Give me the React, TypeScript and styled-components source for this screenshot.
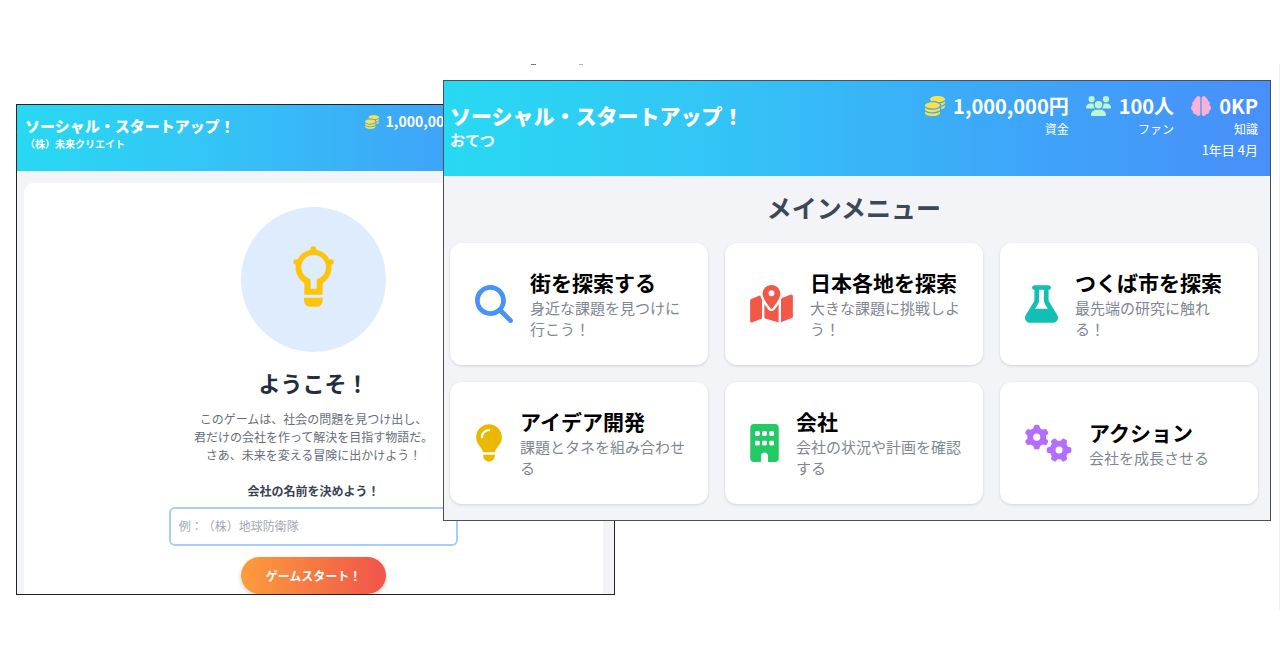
import React from "react";
import styled, { createGlobalStyle } from "styled-components";
import {
  FaBrain,
  FaBuilding,
  FaCoins,
  FaFlask,
  FaGears,
  FaLightbulb,
  FaMagnifyingGlass,
  FaMapLocationDot,
  FaUsers,
} from "react-icons/fa6";

const GlobalStyle = createGlobalStyle`
  * { box-sizing: border-box; }
  body {
    margin: 0;
    background: #ffffff;
    font-family: "Noto Sans CJK JP", "Noto Sans", sans-serif;
    text-spacing-trim: space-all;
  }
  h1, h2, p { margin: 0; }
  button, input { font-family: inherit; }
`;

const Stage = styled.main`
  margin-top: 64px;
  border-right: 1px solid #f1f1f1;
`;

const Specks = styled.svg`
  display: block;
  width: 100%;
  height: 1px;
`;

const Windows = styled.div`
  display: grid;
  grid-template-columns: 427fr 172fr 656fr;
  align-items: start;
  padding: 15px 8px 15px 16px;
`;

const Window = styled.section<{ $front?: boolean }>`
  grid-row: 1;
  grid-column: ${(p) => (p.$front ? "2 / 4" : "1 / 3")};
  z-index: ${(p) => (p.$front ? 1 : 0)};
  margin-top: ${(p) => (p.$front ? 0 : 24)}px;
  min-width: 0;
  overflow: hidden;
  border: 1px solid ${(p) => (p.$front ? "#4b5052" : "#222222")};
  background: #f3f4f7;
`;

const Header = styled.header<{ $small?: boolean }>`
  display: flex;
  align-items: center;
  justify-content: space-between;
  padding: ${(p) => (p.$small ? "8px 10px 12px 8px" : "13px 12px 16px 6px")};
  background: linear-gradient(90deg, #28d9f2 0%, #33c5f6 32%, #3ca9f8 65%, #488ffa 100%);
  color: #ffffff;
  white-space: nowrap;
`;

const Brand = styled.div`
  padding-bottom: 3px;
`;

const Title = styled.h1<{ $small?: boolean }>`
  font-size: ${(p) => (p.$small ? 15 : 21)}px;
  line-height: ${(p) => (p.$small ? 19 : 28)}px;
  font-weight: 900;
`;

const Company = styled.p<{ $small?: boolean }>`
  font-size: ${(p) => (p.$small ? 10 : 15)}px;
  line-height: ${(p) => (p.$small ? 18 : 22)}px;
  font-weight: 700;
`;

const Status = styled.div`
  text-align: right;
`;

const Stats = styled.div<{ $small?: boolean }>`
  display: flex;
  justify-content: flex-end;
  gap: ${(p) => (p.$small ? 13 : 17)}px;
`;

const Stat = styled.div<{ $covered?: boolean }>`
  visibility: ${(p) => (p.$covered ? "hidden" : "visible")};
`;

const StatValue = styled.div<{ $small?: boolean }>`
  display: flex;
  align-items: center;
  gap: ${(p) => (p.$small ? 7 : 8)}px;
  font-size: ${(p) => (p.$small ? 14 : 20)}px;
  line-height: ${(p) => (p.$small ? 17 : 24)}px;
  font-weight: 700;
`;

const StatIcon = styled.span<{ $color: string; $wide?: boolean }>`
  display: flex;
  color: ${(p) => p.$color};

  svg {
    width: ${(p) => (p.$wide ? "1.25em" : "1em")};
    height: 1em;
  }
`;

const StatLabel = styled.div<{ $small?: boolean }>`
  visibility: ${(p) => (p.$small ? "hidden" : "visible")};
  font-size: ${(p) => (p.$small ? 9 : 12)}px;
  line-height: ${(p) => (p.$small ? 14 : 22)}px;
`;

const GameDate = styled.div<{ $small?: boolean }>`
  visibility: ${(p) => (p.$small ? "hidden" : "visible")};
  font-size: ${(p) => (p.$small ? 9 : 13)}px;
  line-height: ${(p) => (p.$small ? 15 : 20)}px;
`;

const Menu = styled.div`
  padding: 14px 12px 16px 6px;
`;

const MenuTitle = styled.h2`
  margin-bottom: 19px;
  color: #3d4758;
  font-size: 25px;
  line-height: 34px;
  font-weight: 700;
  text-align: center;
`;

const MenuGrid = styled.div`
  display: grid;
  grid-template-columns: repeat(3, minmax(0, 1fr));
  grid-auto-rows: 1fr;
  gap: 17px;
`;

const MenuCard = styled.button`
  display: flex;
  align-items: center;
  gap: 17px;
  padding: 24px 20px 26px 25px;
  border: 0;
  border-radius: 12px;
  background: #ffffff;
  box-shadow: 0 1px 3px rgba(0, 0, 0, 0.14);
  text-align: left;
  cursor: pointer;
`;

const MenuIcon = styled.span<{ $color: string; $width: number }>`
  display: flex;
  flex: none;
  padding-top: 2px;
  color: ${(p) => p.$color};

  svg {
    width: ${(p) => p.$width}px;
    height: 38px;
  }
`;

const CardText = styled.span`
  display: block;
  min-width: 0;
`;

const CardTitle = styled.span`
  display: block;
  color: #000000;
  font-size: 21px;
  line-height: 30px;
  font-weight: 700;
`;

const CardNote = styled.span`
  display: block;
  color: #808692;
  font-size: 15px;
  line-height: 21px;
`;

const WelcomeArea = styled.div`
  padding: 12px 11px 0 7px;
`;

const WelcomeCard = styled.form`
  display: flex;
  flex-direction: column;
  align-items: center;
  padding-top: 24px;
  border-radius: 9px 9px 0 0;
  background: #ffffff;
`;

const Circle = styled.div`
  display: flex;
  align-items: center;
  justify-content: center;
  width: 145px;
  height: 145px;
  padding-bottom: 6px;
  border-radius: 50%;
  background: #dfecfe;
`;

const Welcome = styled.h2`
  margin-top: 16px;
  color: #222d3d;
  font-size: 22px;
  line-height: 28px;
  font-weight: 700;
`;

const Story = styled.p`
  margin-top: 14px;
  color: #666e7a;
  font-size: 12px;
  line-height: 18px;
  text-align: center;
`;

const NameLabel = styled.label`
  margin-top: 18px;
  color: #384252;
  font-size: 12px;
  line-height: 18px;
  font-weight: 700;
`;

const NameInput = styled.input`
  width: 50%;
  height: 39px;
  margin-top: 7px;
  padding: 0 8px 2px;
  border: 2px solid #a6cdfb;
  border-radius: 6px;
  background: #ffffff;
  color: #384252;
  font-size: 12px;
  text-spacing-trim: space-all;

  &::placeholder {
    color: #a3a8b2;
    opacity: 1;
  }
`;

const StartButton = styled.button`
  width: 145px;
  height: 37px;
  margin-top: 11px;
  padding: 0;
  border: 0;
  border-radius: 19px;
  background: linear-gradient(90deg, #fc9d3c, #f0544a);
  box-shadow: 0 2px 5px rgba(0, 0, 0, 0.2);
  color: #ffffff;
  font-size: 12px;
  font-weight: 700;
  cursor: pointer;
`;

function IdeaBulb() {
  return (
    <svg width="41" height="61" viewBox="429 169 123 183" fill="#fcc50b" aria-hidden="true">
      <path
        fillRule="evenodd"
        d="M463 315V280A54 54 0 1 1 518 280V315ZM482 297H500V275Q500 270 502 268A37 37 0 1 0 480 268Q482 270 482 275Z"
      />
      <circle cx="490" cy="179" r="9" />
      <circle cx="438" cy="217" r="8" />
      <circle cx="543" cy="217" r="8" />
      <path d="M462 324H518V333Q516 351 500 351H480Q464 351 462 333Z" />
    </svg>
  );
}

const stats = [
  { icon: <FaCoins />, color: "#fde047", value: "1,000,000円", label: "資金" },
  { icon: <FaUsers />, color: "#bbf7d0", value: "100人", label: "ファン", wide: true },
  { icon: <FaBrain />, color: "#fbb1d8", value: "0KP", label: "知識" },
];

function GameHeader({ company, small }: { company: string; small?: boolean }) {
  return (
    <Header $small={small}>
      <Brand>
        <Title $small={small}>ソーシャル・スタートアップ！</Title>
        <Company $small={small}>{company}</Company>
      </Brand>
      <Status>
        <Stats $small={small}>
          {stats.map((s, i) => (
            <Stat key={s.label} $covered={small && i > 0}>
              <StatValue $small={small}>
                <StatIcon $color={s.color} $wide={s.wide}>
                  {s.icon}
                </StatIcon>
                {s.value}
              </StatValue>
              <StatLabel $small={small}>{s.label}</StatLabel>
            </Stat>
          ))}
        </Stats>
        <GameDate $small={small}>1年目 4月</GameDate>
      </Status>
    </Header>
  );
}

const menu = [
  { icon: <FaMagnifyingGlass />, width: 38, color: "#4791fa", title: "街を探索する", note: "身近な課題を見つけに行こう！" },
  { icon: <FaMapLocationDot />, width: 43, color: "#f25848", title: "日本各地を探索", note: "大きな課題に挑戦しよう！" },
  { icon: <FaFlask />, width: 33, color: "#13bfb2", title: "つくば市を探索", note: "最先端の研究に触れる！" },
  { icon: <FaLightbulb />, width: 28, color: "#ebb800", title: "アイデア開発", note: "課題とタネを組み合わせる" },
  { icon: <FaBuilding />, width: 29, color: "#22c964", title: "会社", note: "会社の状況や計画を確認する" },
  { icon: <FaGears />, width: 47, color: "#b46efb", title: "アクション", note: "会社を成長させる" },
];

export default function App() {
  return (
    <>
      <GlobalStyle />
      <Stage>
        <Specks aria-hidden="true">
          <rect x="531" width="5" height="1" fill="#777777" />
          <rect x="579" width="4" height="1" fill="#b5b5b5" />
        </Specks>
        <Windows>
          <Window>
            <GameHeader company="（株）未来クリエイト" small />
            <WelcomeArea>
              <WelcomeCard onSubmit={(e) => e.preventDefault()}>
                <Circle>
                  <IdeaBulb />
                </Circle>
                <Welcome>ようこそ！</Welcome>
                <Story>
                  このゲームは、社会の問題を見つけ出し、
                  <br />
                  君だけの会社を作って解決を目指す物語だ。
                  <br />
                  さあ、未来を変える冒険に出かけよう！
                </Story>
                <NameLabel htmlFor="company-name">会社の名前を決めよう！</NameLabel>
                <NameInput id="company-name" type="text" placeholder="例：（株）地球防衛隊" />
                <StartButton type="submit">ゲームスタート！</StartButton>
              </WelcomeCard>
            </WelcomeArea>
          </Window>
          <Window $front>
            <GameHeader company="おてつ" />
            <Menu>
              <MenuTitle>メインメニュー</MenuTitle>
              <MenuGrid>
                {menu.map((m) => (
                  <MenuCard key={m.title} type="button">
                    <MenuIcon $color={m.color} $width={m.width}>
                      {m.icon}
                    </MenuIcon>
                    <CardText>
                      <CardTitle>{m.title}</CardTitle>
                      <CardNote>{m.note}</CardNote>
                    </CardText>
                  </MenuCard>
                ))}
              </MenuGrid>
            </Menu>
          </Window>
        </Windows>
      </Stage>
    </>
  );
}
